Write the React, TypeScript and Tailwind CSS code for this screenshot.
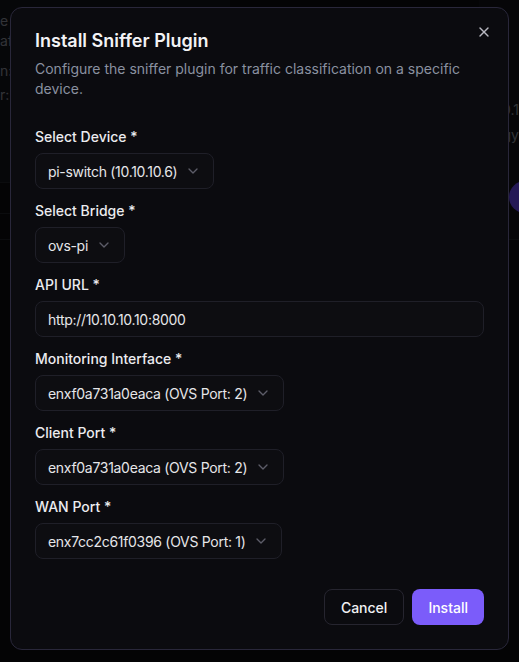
import React from "react";
import { ChevronDown, X } from "lucide-react";

interface Field {
    label: string;
    value: string;
    kind: "select" | "input";
}

const fields: Field[] = [
    { label: "Select Device *", value: "pi-switch (10.10.10.6)", kind: "select" },
    { label: "Select Bridge *", value: "ovs-pi", kind: "select" },
    { label: "API URL *", value: "http://10.10.10.10:8000", kind: "input" },
    { label: "Monitoring Interface *", value: "enxf0a731a0eaca (OVS Port: 2)", kind: "select" },
    { label: "Client Port *", value: "enxf0a731a0eaca (OVS Port: 2)", kind: "select" },
    { label: "WAN Port *", value: "enx7cc2c61f0396 (OVS Port: 1)", kind: "select" },
];

function FieldRow({ field }: { field: Field }) {
    return (
        <div className="flex flex-col gap-[6px]">
            <label className="text-[14px] leading-5 font-medium text-[#ececef]">{field.label}</label>
            {field.kind === "select" ? (
                <button className="flex h-9 w-fit items-center gap-2 rounded-lg border border-[#1f1f28] bg-[#0d0d11] px-3 text-[14px] tracking-[-0.3px] text-[#e6e6e9]">
                    <span>{field.value}</span>
                    <ChevronDown size={16} className="text-[#5d5d68]" />
                </button>
            ) : (
                <input
                    readOnly
                    value={field.value}
                    className="h-9 w-full rounded-lg border border-[#1f1f28] bg-[#0d0d11] px-3 text-[14px] tracking-[-0.3px] text-[#e6e6e9] outline-none"
                />
            )}
        </div>
    );
}

export default function App() {
    return (
        <div className="relative h-[662px] overflow-hidden bg-[#0a0b0e] font-['Inter',sans-serif]">
            {/* Page behind the dialog */}
            <div className="flex h-full justify-between">
                <div className="flex w-[230px] flex-col">
                    <div className="flex h-[183px] flex-col border-b border-[#1d1e24] bg-[#111217] pt-[11px] text-[14px] text-[#7d808a]">
                        <span className="leading-5">e</span>
                        <span className="leading-5">af</span>
                        <span className="mt-[10px] leading-5">n:</span>
                        <span className="mt-[4px] leading-5">r:</span>
                    </div>
                    <div className="flex h-[31px] items-center border-b border-[#1d1e24] pl-[20px] text-[14px] text-[#c9a96a]">D</div>
                    <div className="h-[26px] border-b border-[#1d1e24]" />
                </div>
                <div className="flex w-[40px] flex-col items-end">
                    <div className="flex h-[240px] w-full flex-col items-end border-b border-[#1d1e24] bg-[#0f1014] pt-[100px] text-[14px] text-[#7d808a]">
                        <span className="leading-5">0.1</span>
                        <span className="mt-[5px] leading-5">gy</span>
                        <span className="mt-[36px] mr-[-22px] h-[32px] w-[32px] rounded-full bg-[#5b3fd6]" />
                    </div>
                </div>
            </div>

            {/* Overlay + dialog */}
            <div className="fixed inset-0 flex items-start justify-center bg-black/60 pt-[7px]">
                <div className="relative flex h-[643px] w-[499px] flex-col rounded-xl border border-[#29273a] bg-[#0b0b0f] p-6">
                    <button className="absolute right-4 top-4 text-[#b9b9c2]">
                        <X size={16} />
                    </button>

                    <div className="flex flex-col gap-[9px]">
                        <h2 className="text-[18px] leading-[18px] font-semibold text-[#f3f3f5]">Install Sniffer Plugin</h2>
                        <p className="pr-4 text-[14px] leading-5 text-[#8a91a0]">
                            Configure the sniffer plugin for traffic classification on a specific device.
                        </p>
                    </div>

                    <div className="mt-[28px] flex flex-col gap-3">
                        {fields.map((f) => (
                            <FieldRow key={f.label} field={f} />
                        ))}
                    </div>

                    <div className="mt-auto flex justify-end gap-2">
                        <button className="h-9 rounded-lg border border-[#26252f] px-4 text-[14px] font-medium text-[#f1f1f3]">
                            Cancel
                        </button>
                        <button className="h-9 rounded-lg bg-[#7b5cfa] px-4 text-[14px] font-medium text-white">
                            Install
                        </button>
                    </div>
                </div>
            </div>
        </div>
    );
}
